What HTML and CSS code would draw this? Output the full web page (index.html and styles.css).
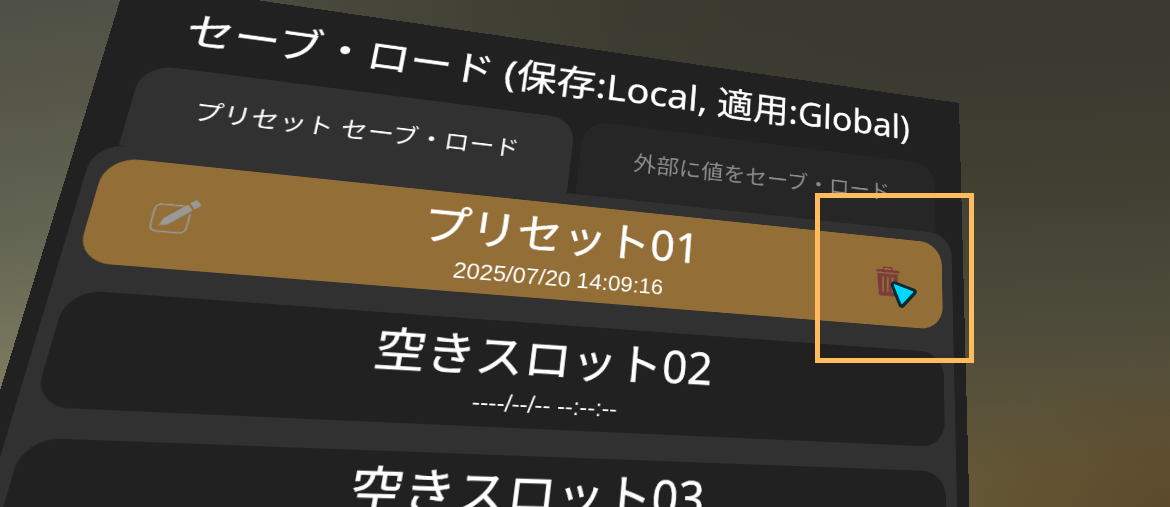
FILE: index.html
```html
<!DOCTYPE html>
<html lang="ja">
<head>
<meta charset="utf-8">
<title>セーブ・ロード</title>
<link rel="stylesheet" href="styles.css">
</head>
<body>
<main class="scene">
  <section class="panel">
    <h1 class="title"><span class="title-text">セーブ・ロード (保存:Local, 適用:Global)</span></h1>
    <nav class="tabs">
      <div class="tab tab-active">プリセット セーブ・ロード</div>
      <div class="tab">外部に値をセーブ・ロード</div>
    </nav>
    <div class="slots">
      <article class="slot slot-used">
        <svg class="icon edit" viewBox="-31 -31 60 60">
          <path d="M6 -12.500H-13.500Q-20.500 -12.500 -20.500 -5.500V10.500Q-20.500 17.500 -13.500 17.500H5.500Q12.500 17.500 12.500 10.500V-4" fill="none" stroke="#999" stroke-width="1.600"/>
          <path d="M-13 11L-10.500 3L8.500 -14.500L14 -8.500L-5.500 9.500Z M10.200 -16L14 -19.500Q15.500 -20.700 17 -19.300L20 -16Q21 -14.500 19.700 -13.300L15.600 -9.700Z" fill="#999"/>
        </svg>
        <div class="slot-body">
          <div class="slot-name">プリセット01</div>
          <div class="slot-date">2025/07/20 14:09:16</div>
        </div>
        <svg class="icon trash" viewBox="-31 -31 60 60">
          <path d="M-6 -15V-17.500Q-6 -19 -4.500 -19H4.500Q6 -19 6 -17.500V-15" fill="none" stroke="#7d3c3c" stroke-width="1.800"/>
          <path d="M-15.500 -14.500Q-15.500 -16 -14 -16H14Q15.500 -16 15.500 -14.500V-12.500H-15.500Z" fill="#7d3c3c"/>
          <path fill-rule="evenodd" d="M-14 -10.800H14L12 16Q11.800 18.500 9.500 18.500H-9.500Q-11.800 18.500 -12 16Z M-7.500 -6.500V13.500H-5V-6.500Z M-1.200 -6.500V13.500H1.200V-6.500Z M5 -6.500V13.500H7.500V-6.500Z" fill="#7d3c3c"/>
        </svg>
      </article>
      <article class="slot">
        <div class="slot-body">
          <div class="slot-name">空きスロット02</div>
          <div class="slot-date">----/--/-- --:--:--</div>
        </div>
      </article>
      <article class="slot">
        <div class="slot-body">
          <div class="slot-name">空きスロット03</div>
        </div>
      </article>
    </div>
  </section>
  <div class="highlight"></div>
  <svg class="cursor" viewBox="0 0 32 32">
    <path d="M8.200 8.700L27.200 16L15.800 28.300Z" fill="#073036" stroke="#052a30" stroke-width="7" stroke-linejoin="round"/>
    <path d="M8.500 9L26.500 16L15.900 27.300Z" fill="#00d8ff" stroke="#00d8ff" stroke-width="1.500" stroke-linejoin="round"/>
  </svg>
</main>
</body>
</html>
```
FILE: styles.css
```css
* { box-sizing: border-box; }

body {
  margin: 0;
  overflow: hidden;
  color: #fff;
  font-family: "Noto Sans", "Noto Sans CJK JP", sans-serif;
}

.scene {
  position: relative;
  width: 1170px;
  height: 507px;
  overflow: hidden;
  background:
    linear-gradient(172deg, #4f5046 0, #575849 110px, #636653 240px, #74735b 330px, #827e5c 410px) 0 0 / 130px 507px no-repeat,
    linear-gradient(90deg, #4b4b3f 250px, rgba(62, 62, 51, .5) 620px, transparent 900px) 0 0 / 940px 110px no-repeat,
    radial-gradient(ellipse 220px 160px at 1180px 520px, rgba(86, 62, 36, .6), transparent),
    linear-gradient(178deg, #38382e 0, #3c3b31 120px, #3f3e31 200px, #454335 260px, #4d4b39 360px, #58513a 430px, #645836 510px);
}

/* The menu is a flat board seen at an angle. */
.panel {
  display: flex;
  flex-direction: column;
  width: 1000px;
  height: 720px;
  background: #212121;
  transform-origin: 0 0;
  transform: matrix3d(1.07009, .14756, 0, .00024723, -.27568, .77544, 0, -.0003091, 0, 0, 1, 0, 126, -19.1, 0, 1);
}

.title {
  display: flex;
  justify-content: center;
  align-items: center;
  height: 97.5px;
  margin: 0;
  padding-right: 3px;
  font-size: 46.800px;
  font-weight: 400;
  line-height: 1;
  white-space: nowrap;
  -webkit-text-stroke: .4px #fff;
}

.tabs {
  display: flex;
  gap: 10px;
  height: 97px;
  padding: 0 38px;
}

.tab {
  display: flex;
  flex: 1;
  justify-content: center;
  align-items: center;
  border-radius: 30px 30px 0 0;
  background: #262626;
  color: #8c8c8c;
  font-size: 27.700px;
  line-height: 1;
  white-space: nowrap;
}

.tab-active {
  background: #313131;
  color: #fff;
}

.slots {
  display: flex;
  flex: 1;
  flex-direction: column;
  gap: 29.2px;
  margin: 0 16px;
  padding: 14.500px 14px;
  border-radius: 30px 30px 0 0;
  background: #313131;
}

.slot {
  display: flex;
  flex: none;
  justify-content: center;
  align-items: center;
  height: 116.300px;
  border-radius: 30px;
  background: #212121;
}

.slot-used {
  justify-content: space-between;
  padding: 0 45px;
  background: #936f37;
}

.slot-body {
  align-self: flex-start;
  padding-top: 13px;
  text-align: center;
  white-space: nowrap;
}

.slot-name {
  height: 52px;
  font-size: 50.500px;
  line-height: 52px;
  -webkit-text-stroke: .5px #fff;
}

.slot-date {
  margin-top: 12px;
  font-family: "Liberation Sans", sans-serif;
  font-size: 25.300px;
  line-height: 29px;
}

.icon {
  flex: none;
  width: 60px;
  height: 60px;
}

.highlight {
  position: absolute;
  left: 815px;
  top: 193px;
  width: 159px;
  height: 170px;
  border: 5px solid #ffbb5c;
}

.cursor {
  position: absolute;
  left: 886px;
  top: 276px;
  width: 32px;
  height: 32px;
}
```
